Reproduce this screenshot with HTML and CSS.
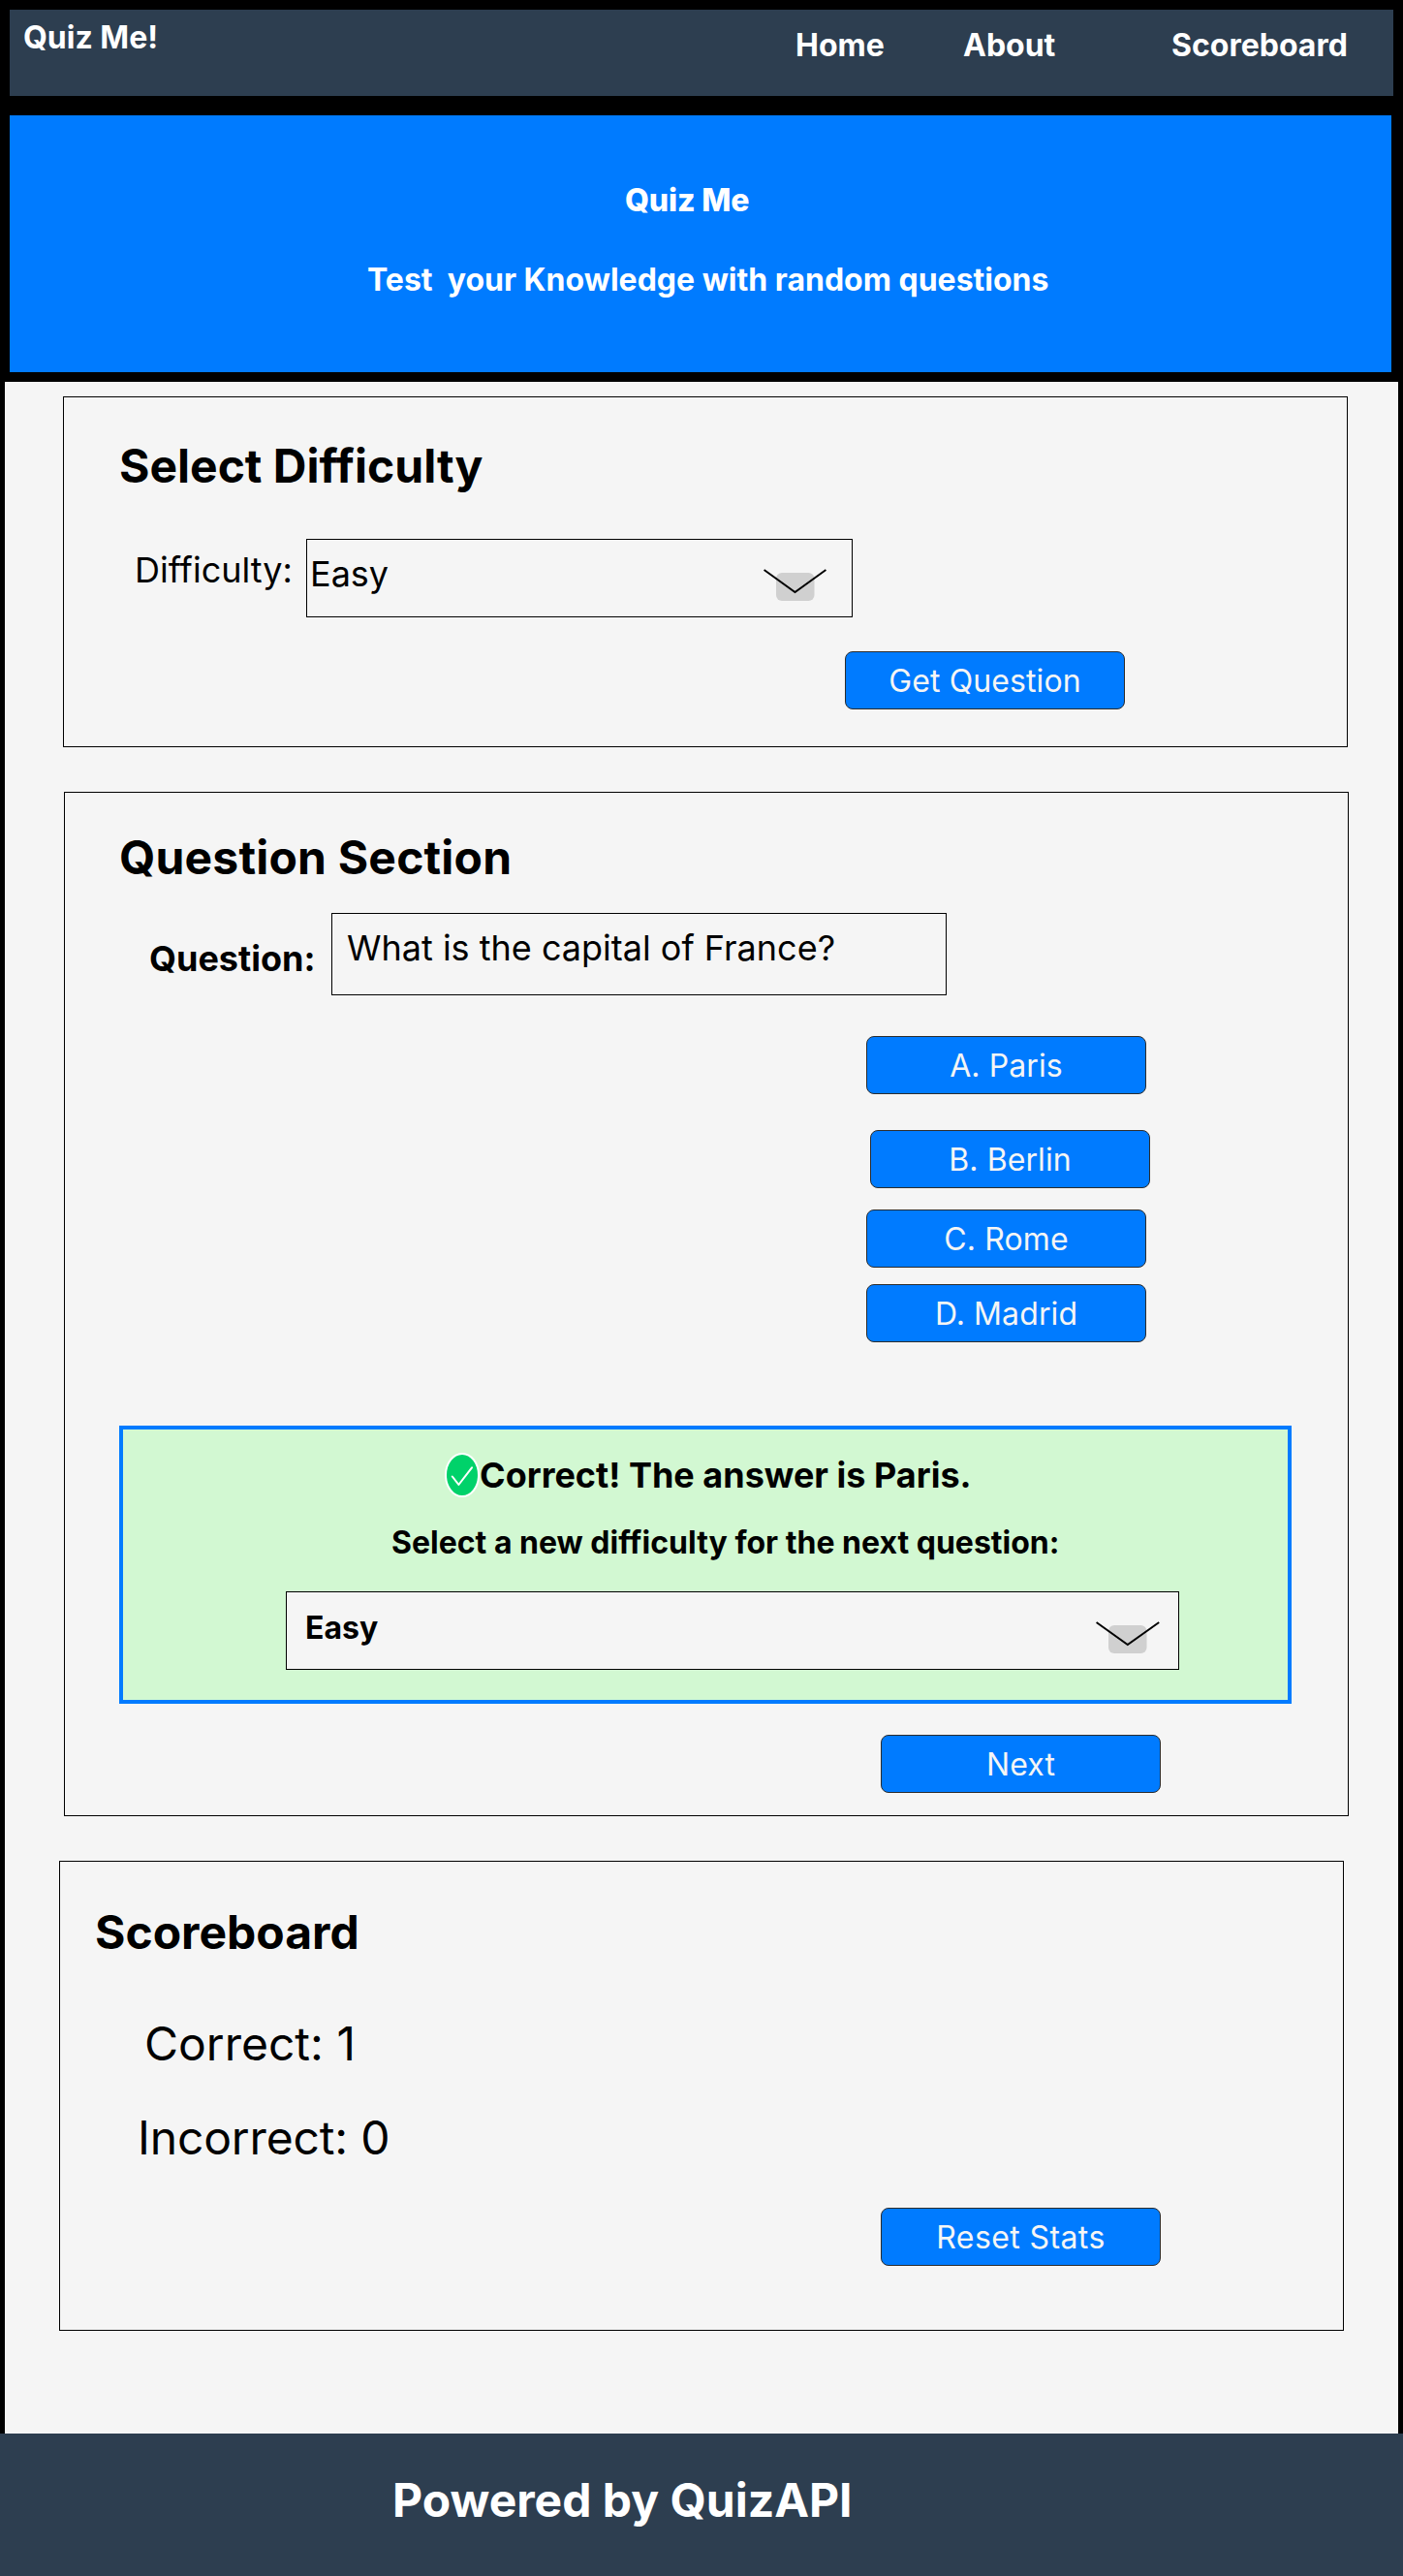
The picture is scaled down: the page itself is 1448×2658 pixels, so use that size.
FILE: index.html
```html
<!DOCTYPE html>
<html lang="en">
<head>
<meta charset="utf-8">
<title>Quiz Me!</title>
<link rel="stylesheet" href="styles.css">
</head>
<body>
<header class="topbar">
  <div class="brand">Quiz Me!</div>
  <nav class="nav">
    <a>Home</a>
    <a>About</a>
    <a>Scoreboard</a>
  </nav>
</header>

<section class="hero">
  <h1 class="hero-title">Quiz Me</h1>
  <p class="hero-text">Test&nbsp; your Knowledge with random questions</p>
</section>

<main class="main">
  <section class="card card-difficulty">
    <h2 class="card-title title-difficulty">Select Difficulty</h2>
    <div class="difficulty-row">
      <span class="difficulty-label">Difficulty:</span>
      <div class="select select-small">
        <span>Easy</span>
        <svg class="chevron" width="66" height="34" viewBox="0 0 66 34">
          <rect x="13" y="4" width="39.5" height="29" rx="6" fill="#d0d0d0"/>
          <path d="M0.6 1L32.5 24L64.4 1" fill="none" stroke="#000" stroke-width="2"/>
        </svg>
      </div>
    </div>
    <button class="btn btn-get">Get Question</button>
  </section>

  <section class="card card-question">
    <h2 class="card-title title-question">Question Section</h2>
    <div class="question-row">
      <span class="question-label">Question:</span>
      <div class="question-box">What is the capital of France?</div>
    </div>
    <div class="answers">
      <button class="btn">A. Paris</button>
      <button class="btn btn-b">B. Berlin</button>
      <button class="btn btn-c">C. Rome</button>
      <button class="btn btn-d">D. Madrid</button>
    </div>
    <div class="feedback">
      <div class="result">
        <svg class="check" width="36" height="46" viewBox="0 0 36 46">
          <ellipse cx="18" cy="23" rx="17" ry="22" fill="#00d26a" stroke="#fff" stroke-width="2"/>
          <path d="M7.8 24.5L14.4 33L28 15.3" fill="none" stroke="#fff" stroke-width="2" stroke-linecap="round" stroke-linejoin="round"/>
        </svg>
        <p class="result-text">Correct! The answer is Paris.</p>
      </div>
      <p class="prompt">Select a new difficulty for the next question:</p>
      <div class="select select-wide">
        <span>Easy</span>
        <svg class="chevron" width="67" height="34" viewBox="0 0 67 34">
          <rect x="13" y="4" width="39.5" height="29" rx="6" fill="#d0d0d0"/>
          <path d="M0.6 1L32.8 24L65.2 1" fill="none" stroke="#000" stroke-width="2"/>
        </svg>
      </div>
    </div>
    <button class="btn btn-next">Next</button>
  </section>

  <section class="card card-score">
    <h2 class="card-title">Scoreboard</h2>
    <p class="stat stat-correct">Correct: 1</p>
    <p class="stat stat-incorrect">Incorrect: 0</p>
    <button class="btn btn-reset">Reset Stats</button>
  </section>
</main>

<footer class="footer">Powered by QuizAPI</footer>
</body>
</html>
```
FILE: styles.css
```css
* {
  box-sizing: border-box;
  margin: 0;
}

body {
  width: 1448px;
  height: 2658px;
  display: flex;
  flex-direction: column;
  background: #000;
  color: #000;
  font-family: Inter, sans-serif;
  white-space: nowrap;
}

/* Header */
.topbar {
  display: flex;
  justify-content: space-between;
  align-items: flex-start;
  width: 1428px;
  height: 89px;
  margin: 10px 10px 0;
  padding: 9px 0 0 14px;
  background: #2d3e50;
  color: #fff;
  font-size: 32px;
  font-weight: 700;
  line-height: 39px;
}

.nav {
  display: grid;
  grid-template-columns: 173px 215px 229px;
  margin-top: 8px;
}

/* Hero */
.hero {
  width: 1426px;
  height: 265px;
  margin: 20px 0 0 10px;
  padding-top: 68px;
  background: #007bff;
  color: #fff;
  line-height: 39px;
}

.hero-title {
  margin-left: 635px;
  font-size: 32px;
  font-weight: 800;
  letter-spacing: -0.15px;
}

.hero-text {
  margin: 43px 0 0 369px;
  font-size: 32px;
  font-weight: 700;
}

/* Main */
.main {
  width: 1438px;
  height: 2117px;
  margin: 10px 0 0 5px;
  padding-top: 15px;
  background: #f5f5f5;
}

.card {
  width: 1326px;
  border: 1px solid #000;
}

.card-title {
  font-size: 48px;
  font-weight: 700;
  line-height: 59px;
}

.title-question {
  letter-spacing: 0.2px;
}

.select {
  display: flex;
  justify-content: space-between;
  align-items: flex-start;
  height: 81px;
  border: 1px solid #000;
  background: #f5f5f5;
}

.chevron {
  display: block;
}

.btn {
  display: block;
  width: 289px;
  height: 60px;
  padding: 1px 0 0;
  border: 1px solid #2c2c2c;
  border-radius: 8px;
  background: #007bff;
  color: #f5f5f5;
  font-family: inherit;
  font-size: 32px;
  font-weight: 400;
  letter-spacing: 0.1px;
  line-height: 39px;
  text-align: center;
}

/* Select difficulty */
.card-difficulty {
  height: 362px;
  margin-left: 60px;
  padding: 41px 0 0 57px;
}

.difficulty-row {
  display: flex;
  align-items: flex-start;
  margin: 46px 0 0 16px;
  font-size: 36px;
  line-height: 44px;
}

.difficulty-label {
  width: 177px;
  margin-top: 10px;
}

.select-small {
  width: 564px;
  padding: 0 25px 0 3px;
}

.select-small span {
  margin-top: 13px;
}

.select-small .chevron,
.select-wide .chevron {
  margin-top: 30px;
}

.btn-get {
  margin: 35px 0 0 749px;
}

/* Question */
.card-question {
  height: 1057px;
  margin: 46px 0 0 61px;
  padding: 37px 0 0 56px;
}

.question-row {
  display: flex;
  align-items: flex-start;
  margin: 28px 0 0 31px;
  font-size: 36px;
  line-height: 44px;
}

.question-label {
  width: 188px;
  margin-top: 25px;
  font-weight: 700;
}

.question-box {
  width: 635px;
  height: 85px;
  padding: 13px 0 0 15px;
  border: 1px solid #000;
}

.answers {
  margin: 42px 0 0 771px;
}

.btn-b {
  margin: 37px 0 0 4px;
}

.btn-c {
  margin-top: 22px;
}

.btn-d {
  margin-top: 17px;
}

.feedback {
  width: 1210px;
  height: 287px;
  margin-top: 86px;
  padding-top: 24px;
  border: 4px solid #007bff;
  background: #d2f8d2;
  font-weight: 700;
}

.result {
  display: flex;
  align-items: flex-start;
  height: 46px;
  margin-left: 332px;
  font-size: 36px;
  line-height: 44px;
}

.result-text {
  margin-top: 1px;
}

.prompt {
  margin: 27px 0 0 277px;
  font-size: 32px;
  line-height: 39px;
}

.select-wide {
  width: 922px;
  margin: 31px 0 0 168px;
  padding: 0 18px 0 19px;
  font-size: 32px;
  line-height: 39px;
}

.select-wide span {
  margin-top: 17px;
}

.btn-next {
  margin: 32px 0 0 786px;
}

/* Scoreboard */
.card-score {
  height: 485px;
  margin: 46px 0 0 56px;
  padding: 43px 0 0 36px;
}

.stat {
  font-size: 48px;
  line-height: 59px;
}

.stat-correct {
  margin: 56px 0 0 51px;
}

.stat-incorrect {
  margin: 38px 0 0 44px;
  letter-spacing: -0.15px;
}

.btn-reset {
  margin: 43px 0 0 811px;
  letter-spacing: 0.4px;
}

/* Footer */
.footer {
  height: 147px;
  padding: 39px 0 0 405px;
  background: #2d3e50;
  color: #fff;
  font-size: 48px;
  font-weight: 700;
  line-height: 59px;
}
```
